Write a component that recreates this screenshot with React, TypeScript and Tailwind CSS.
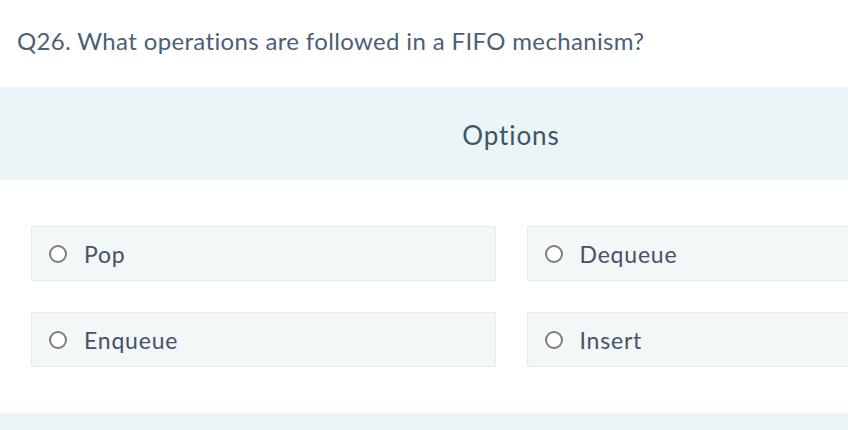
import React from 'react';

const options = ['Pop', 'Dequeue', 'Enqueue', 'Insert'];

export default function App() {
  return (
    <div className="w-[848px] h-[430px] overflow-hidden bg-white font-['Lato','Noto_Sans',sans-serif]">
      <div className="w-[1022px] flex flex-col">
        {/* Question */}
        <div className="pt-[23px] pl-[17px] text-[24px] leading-[36px] tracking-[0.35px] text-[#4b6076]">
          Q26. What operations are followed in a FIFO mechanism?
        </div>

        {/* Options header band */}
        <div className="mt-[28px] h-[93px] bg-[#ebf4f7] flex items-center justify-center pt-[3px]">
          <span className="text-[26px] tracking-[0.9px] text-[#3e5468]">Options</span>
        </div>

        {/* Options grid */}
        <div className="grid grid-cols-2 gap-x-[31px] gap-y-[31px] px-[31px] pt-[46px] pb-[46px]">
          {options.map((opt) => (
            <div
              key={opt}
              className="h-[55px] rounded-[2px] border border-[#e2ebee] bg-[#f2f7f8] flex items-center pl-[17px] gap-[17px]"
            >
              <span className="w-[18px] h-[18px] rounded-full border-2 border-[#7d7d7d] bg-white shrink-0 mt-[1px]" />
              <span className="text-[23px] tracking-[0.8px] text-[#4b5068] mt-[1px]">{opt}</span>
            </div>
          ))}
        </div>

        {/* Next band */}
        <div className="h-[20px] bg-[#ebf4f7]" />
      </div>
    </div>
  );
}
